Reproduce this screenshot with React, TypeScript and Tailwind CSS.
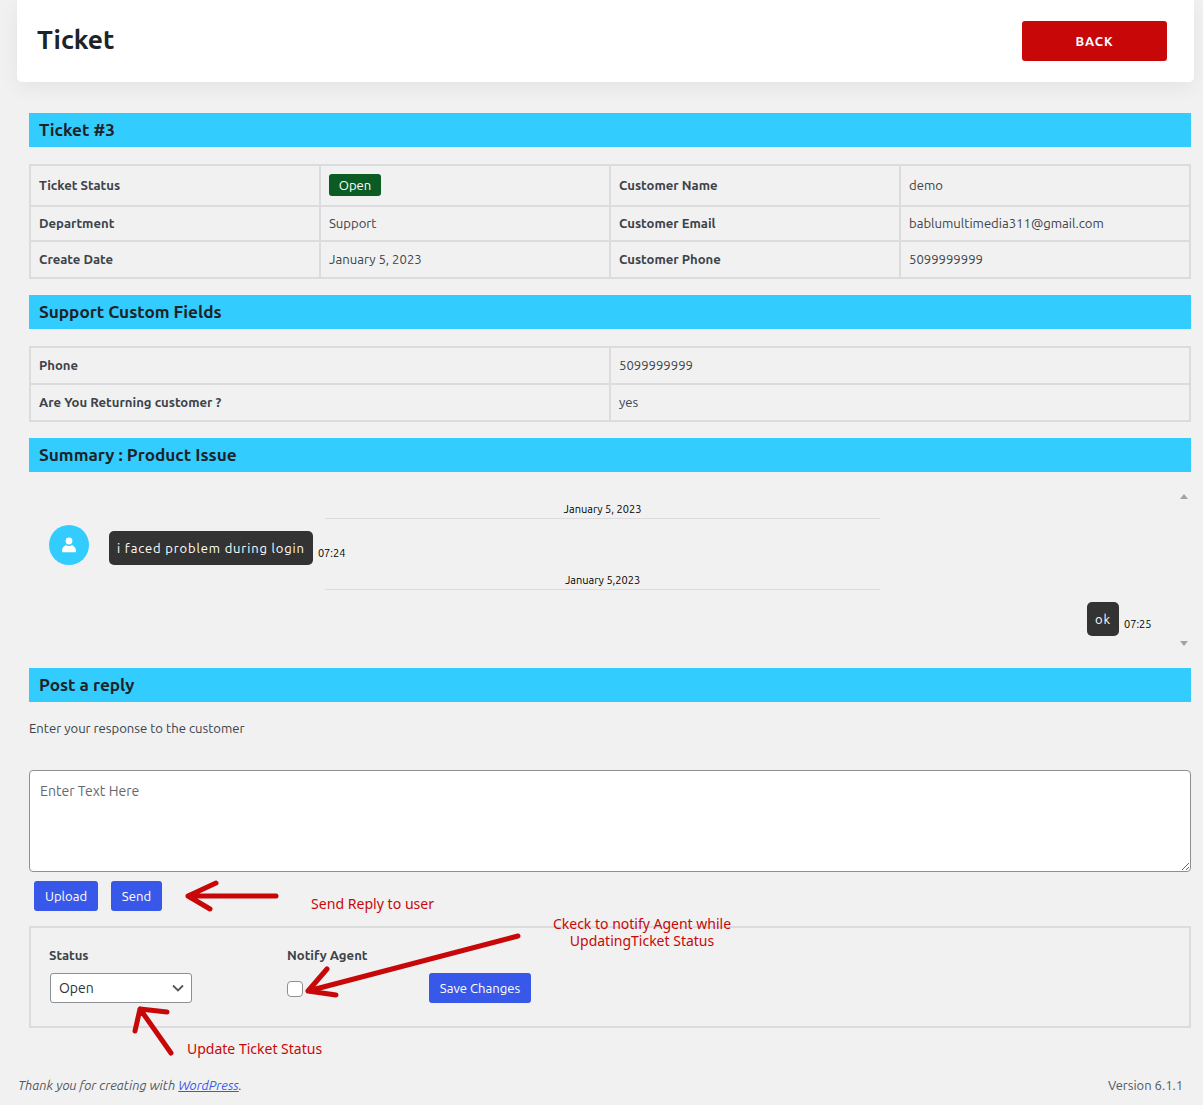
import React from 'react'

const font = "font-['Ubuntu','Noto_Sans','Open_Sans',sans-serif]"

function SectionBar({ title }: { title: string }) {
  return (
    <div className="h-[34px] bg-[#33ccff] px-[10px] text-[17.2px] leading-[34px] font-bold text-[#1d2327]">{title}</div>
  )
}

const cell = 'border-2 border-[#dcdcde] px-2 text-[13.12px] text-[#3c434a]'
const head = cell + ' font-bold'

function DateLine({ text }: { text: string }) {
  return (
    <div className="ml-[296px] h-[19px] w-[555px] border-b border-[#dcdcde] text-center text-[11px] leading-[18px] text-black">
      {text}
    </div>
  )
}

function Arrow({ className, box, d }: { className: string; box: string; d: string }) {
  return (
    <svg className={`pointer-events-none absolute overflow-visible ${className}`} viewBox={box} fill="none" stroke="#c80808" strokeWidth="5" strokeLinecap="round" strokeLinejoin="round">
      <path d={d} />
    </svg>
  )
}

export default function App() {
  return (
    <div className={`relative h-[1105px] w-[1203px] overflow-hidden bg-[#f1f1f1] ${font}`}>
      <header className="ml-[17px] flex h-[82px] w-[1177px] items-center justify-between rounded-b-[5px] bg-white pr-[27px] pl-[20px] shadow-[0_5px_20px_rgba(0,0,0,0.06)]">
        <h1 className="mb-[2px] text-[26.4px] font-bold text-[#1d2327]">Ticket</h1>
        <button className="h-[40px] w-[145px] rounded-[3px] bg-[#c80808] pt-[1px] text-[13px] font-bold tracking-[0.9px] text-white">BACK</button>
      </header>

      <main className="mr-[12px] ml-[29px] pt-[31px]">
        <SectionBar title="Ticket #3" />
        <table className="mt-[17px] w-[1162px] table-fixed border-collapse">
          <tbody>
            <tr className="h-[41px]">
              <td className={head}>Ticket Status</td>
              <td className={cell}>
                <span className="mb-[2px] inline-block h-[22px] w-[52px] rounded-[3px] bg-[#0b5c24] text-center align-middle leading-[22px] text-white">Open</span>
              </td>
              <td className={head}>Customer Name</td>
              <td className={cell}>demo</td>
            </tr>
            <tr className="h-[35px]">
              <td className={head}>Department</td>
              <td className={cell}>Support</td>
              <td className={head}>Customer Email</td>
              <td className={cell}>bablumultimedia311@gmail.com</td>
            </tr>
            <tr className="h-[37px]">
              <td className={head}>Create Date</td>
              <td className={cell}>January 5, 2023</td>
              <td className={head}>Customer Phone</td>
              <td className={cell}>5099999999</td>
            </tr>
          </tbody>
        </table>

        <div className="mt-[16px]">
          <SectionBar title="Support Custom Fields" />
        </div>
        <table className="mt-[17px] w-[1162px] table-fixed border-collapse">
          <tbody>
            <tr className="h-[37px]">
              <td className={head}>Phone</td>
              <td className={cell}>5099999999</td>
            </tr>
            <tr className="h-[37px]">
              <td className={head}>Are You Returning customer ?</td>
              <td className={cell}>yes</td>
            </tr>
          </tbody>
        </table>

        <div className="mt-[16px]">
          <SectionBar title="Summary : Product Issue" />
        </div>

        <div className="relative h-[196px] pt-[28px]">
          <svg className="absolute top-[22px] right-[3px] h-[5px] w-[8px]" viewBox="0 0 8 5"><path d="M4 0 8 5H0z" fill="#a3a3a3" /></svg>
          <DateLine text="January 5, 2023" />
          <div className="mt-[6px] flex items-end pl-[20px]">
            <div className="flex h-[40px] w-[40px] items-center justify-center rounded-full bg-[#33ccff]">
              <svg className="h-[16px] w-[16px]" viewBox="0 0 16 16" fill="#fff">
                <circle cx="8" cy="4" r="3.4" />
                <path d="M1 14.2c0-3.6 2.4-6 4.4-6 .8.6 1.7.9 2.6.9s1.8-.3 2.6-.9c2 0 4.4 2.4 4.4 6 0 .6-.4 1-1 1H2c-.6 0-1-.4-1-1z" />
              </svg>
            </div>
            <div className="ml-[20px] h-[34px] rounded-[5px] bg-[#333333] px-[8px] text-[13px] leading-[34px] tracking-[0.85px] text-white">i faced problem during login</div>
            <span className="mb-[5px] ml-[5px] text-[11px] leading-[14px] text-black">07:24</span>
          </div>
          <div className="mt-[6px]">
            <DateLine text="January 5,2023" />
          </div>
          <div className="mt-[12px] flex items-end justify-end pr-[39.5px]">
            <div className="h-[34px] w-[32px] rounded-[5px] bg-[#333333] text-center text-[13px] leading-[34px] tracking-[0.85px] text-white">ok</div>
            <span className="mb-[5px] ml-[5px] text-[11px] leading-[14px] text-black">07:25</span>
          </div>
          <svg className="absolute right-[3px] bottom-[22px] h-[5px] w-[8px]" viewBox="0 0 8 5"><path d="M0 0h8L4 5z" fill="#a3a3a3" /></svg>
        </div>

        <SectionBar title="Post a reply" />
        <p className="mt-[17px] text-[13.12px] leading-[18px] text-[#3c434a]">Enter your response to the customer</p>

        <textarea
          placeholder="Enter Text Here"
          className="mt-[33px] block h-[102px] w-[1162px] rounded-[4px] border border-[#8c8f94] bg-white px-[10px] py-[10px] text-[14.1px] leading-[20px] text-[#2c3338] placeholder:text-[#646970]"
        />

        <div className="mt-[9px] flex gap-[13px] pl-[5px]">
          <button className="h-[30px] w-[64px] rounded-[3px] bg-[#3858e9] pt-[1px] text-[13.12px] text-white">Upload</button>
          <button className="h-[30px] w-[51px] rounded-[3px] bg-[#3858e9] pt-[1px] text-[13.12px] text-white">Send</button>
        </div>

        <div className="mt-[15px] flex h-[102px] w-[1162px] items-start border-2 border-[#dcdcde] pt-[19px] pl-[18px]">
          <div className="w-[238px]">
            <div className="text-[13.12px] leading-[16px] font-bold text-[#3c434a]">Status</div>
            <div className="mt-[10px] ml-[1px] flex h-[30px] w-[142px] items-center justify-between rounded-[3px] border border-[#8c8f94] bg-white pr-[7px] pl-[8px] text-[14px] text-[#2c3338]">
              Open
              <svg className="h-[10px] w-[12px]" viewBox="0 0 12 10" fill="none" stroke="#50575e" strokeWidth="1.8"><path d="M1 2.5 6 7.5l5-5" /></svg>
            </div>
          </div>
          <div className="w-[142px]">
            <div className="text-[13.12px] leading-[16px] font-bold text-[#3c434a]">Notify Agent</div>
            <input type="checkbox" className="mt-[18px] block h-[16px] w-[16px] appearance-none rounded-[4px] border border-[#8c8f94] bg-white" />
          </div>
          <button className="mt-[26px] h-[30px] w-[102px] rounded-[3px] bg-[#3858e9] pt-[1px] text-[13.12px] text-white">Save Changes</button>
        </div>
      </main>

      <footer className="absolute top-[1076px] right-[20px] left-[18px] flex justify-between text-[13px] leading-[18px] text-[#50575e]">
        <i>Thank you for creating with <a className="text-[#3858e9] underline" href="#">WordPress</a>.</i>
        <span>Version 6.1.1</span>
      </footer>

      {/* red notes drawn over the screenshot */}
      <Arrow className="top-[880px] left-[185px] h-[32px] w-[95px]" box="0 0 95 32" d="M91 16H3M31 3 3 16l22 13" />
      <span className="absolute top-[893px] left-[311px] font-['Noto_Sans',sans-serif] text-[14.1px] text-[#c80808]">Send Reply to user</span>
      <Arrow className="top-[932px] left-[303px] h-[68px] w-[220px]" box="0 0 220 68" d="M215 4 5 59M24 37 5 59l28 4" />
      <span className="absolute top-[915px] left-[542px] w-[200px] text-center font-['Noto_Sans',sans-serif] text-[14px] leading-[17px] text-[#c80808]">Ckeck to notify Agent while UpdatingTicket Status</span>
      <Arrow className="top-[1003px] left-[131px] h-[54px] w-[44px]" box="0 0 44 54" d="M40 50 9 6M4 28 9 6l27 3" />
      <span className="absolute top-[1038px] left-[187px] font-['Noto_Sans',sans-serif] text-[14px] text-[#c80808]">Update Ticket Status</span>
    </div>
  )
}
